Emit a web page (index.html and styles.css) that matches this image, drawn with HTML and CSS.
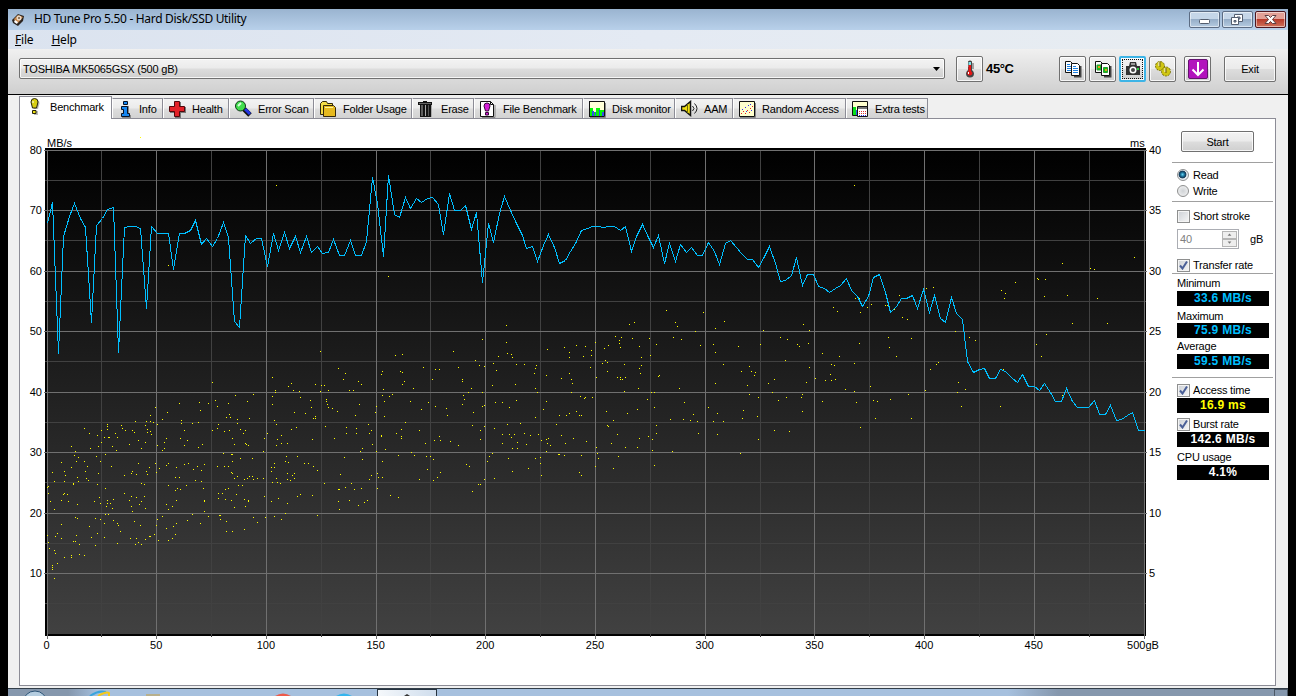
FILE: index.html
```html
<!DOCTYPE html>
<html lang="en">
  <head>
    <meta charset="UTF-8" />
    <meta name="viewport" content="width=device-width, initial-scale=1.0" />
    <title>HD Tune Pro 5.50 - Hard Disk/SSD Utility</title>
    <link rel="stylesheet" href="styles.css">
  </head>
  <body>
    <div class="window">
      <!-- Title bar -->
      <header class="title-bar">
        <svg class="app-icon" width="16" height="16" viewBox="0 0 16 16">
          <path d="M2 8 8 2l6 2-1 5-5 5-5-3z" fill="#2b2521"/>
          <path d="M4 7 8 3l5 2-5 6-3-2z" fill="#c9874a"/>
          <circle cx="9" cy="6" r="2.500" fill="#ead9c6"/>
          <circle cx="9" cy="6" r="1" fill="#75583c"/>
          <path d="m5 8 3 2-1 2-3-2z" fill="#fff"/>
        </svg>
        <span class="title">HD Tune Pro 5.50 - Hard Disk/SSD Utility</span>
        <div class="window-buttons">
          <button class="window-button">
            <svg width="29" height="15" viewBox="0 0 29 15"><rect x="9.500" y="7.500" width="10" height="4" rx="1" fill="#fff" stroke="#535d6e"/></svg>
          </button>
          <button class="window-button">
            <svg width="29" height="15" viewBox="0 0 29 15" fill="#fff" stroke="#535d6e">
              <path d="M11.500 2.500h8v7h-8z"/><path d="M14 5h3v2h-3z" fill="#9db3cc"/>
              <path d="M8.500 5.500h7v7h-7z"/><path d="M11 8.500h2v1.500h-2z" fill="#9db3cc"/>
            </svg>
          </button>
          <button class="window-button close">
            <svg width="29" height="15" viewBox="0 0 29 15"><path d="M9 3.500h3.500l2 2 2-2H20l-3.500 4 3.500 4h-3.500l-2-2-2 2H9l3.500-4z" fill="#fff" stroke="#5c3f42"/></svg>
          </button>
        </div>
      </header>

      <nav class="menu">
        <span><u>F</u>ile</span>
        <span><u>H</u>elp</span>
      </nav>

      <!-- Toolbar -->
      <div class="toolbar">
        <div class="drive-select">
          <span>TOSHIBA MK5065GSX (500 gB)</span>
          <svg width="7" height="4" viewBox="0 0 7 4"><path d="M0 0h7L3.500 4z"/></svg>
        </div>
        <button class="tool-button thermometer">
          <svg width="18" height="20" viewBox="0 0 18 20">
            <path d="M7 2.500Q9 .5 11 2.500V11q2 1.500 2 3.500a4 4 0 0 1-8 0Q5 12.500 7 11z" fill="#444"/>
            <path d="M7.500 3h2.500v5H7.500z" fill="#7fe3ea"/>
            <path d="M7.500 6h2.500v6l1.500 2a2.700 2.700 0 0 1-5.300.500q0-1.500 1.300-2.500z" fill="#e81414"/>
            <path d="M11 5h2M11 7h2M11 9h2" stroke="#555"/>
            <path d="M7.500 13v2" stroke="#fff"/>
          </svg>
        </button>
        <span class="temperature">45°C</span>
        <div class="tool-group">
          <button class="tool-button">
            <svg width="18" height="18" viewBox="0 0 18 18" stroke="#111" fill="#fff">
              <path d="M16.500 6v10.500H10" fill="none" stroke="#444" stroke-width="2"/>
              <path d="M1.500 1.500h5l2 2v9h-7z"/><path d="M7.500 3.500h6l2 2v10h-8z"/>
              <path d="M3 4.500h3M3 6.500h4M3 8.500h4M3 10.500h4M9 6.500h3M9 8.500h5M9 10.500h5M9 12.500h5" stroke="#1e80e0"/>
            </svg>
          </button>
          <button class="tool-button">
            <svg width="18" height="18" viewBox="0 0 18 18" stroke="#111" fill="#fff">
              <path d="M16.500 6v10.500H10" fill="none" stroke="#444" stroke-width="2"/>
              <path d="M1.500 1.500h5l2 2v9h-7z"/><path d="M3 5h4v5H3z" fill="#15c51b" stroke="#2d9b31"/>
              <path d="M7.500 3.500h6l2 2v10h-8z"/><path d="M9.500 7.500h4v5h-4z" fill="#15c51b" stroke="#2d9b31"/>
              <path d="M4 6h2v2H4zM11 9h2v2h-2z" fill="#e6a01a" stroke="none"/>
            </svg>
          </button>
          <button class="tool-button focused">
            <svg width="18" height="18" viewBox="0 0 18 18">
              <path d="M2 6h3l1-4h6l1 4h3v9H2z" fill="#333"/><path d="M7 3h4v2H7z" fill="#999"/>
              <circle cx="9" cy="10" r="3.500" fill="#fff"/><circle cx="9" cy="10" r="2" fill="#484848"/>
              <path d="M13 8h2v2h-2z" fill="#28d13c"/>
            </svg>
          </button>
          <button class="tool-button">
            <svg width="20" height="18" viewBox="0 0 20 18">
              <g fill="#cfc613" stroke="#77700a" stroke-dasharray="2 1">
                <circle cx="7" cy="6" r="4.500"/>
                <circle cx="13" cy="11.500" r="4.500"/>
              </g>
              <path d="M6 2v4M12 8v4" stroke="#fff"/><path d="M7 2v5M13 8v5" stroke="#6c5d12"/>
            </svg>
          </button>
          <button class="tool-button download">
            <svg width="20" height="20" viewBox="0 0 20 20">
              <rect x=".5" y=".5" width="19" height="19" rx="1.500" fill="#b213bd" stroke="#651370"/>
              <path d="M10 3v13M4.500 10.500 10 16l5.500-5.500" fill="none" stroke="#fff" stroke-width="2"/>
            </svg>
          </button>
          <button class="exit-button">Exit</button>
        </div>
      </div>

      <!-- Tabs -->
      <div class="tabs">
        <div class="tab active">
          <svg width="18" height="18" viewBox="0 0 18 18">
            <path d="M10.500 1.500q4 0 4 4L13 11H9L7.500 5.500q0-4 3-4zM9 13h4v4H9z" fill="#777" opacity=".5"/>
            <path d="M9.500.5Q13 .5 13 4l-1.500 6h-4L6 4Q6 .5 9.500.5z" fill="#d8cf12" stroke="#26230b"/>
            <path d="M7.500 12.500H11v3H7.500z" fill="#eee213" stroke="#26230b"/><path d="M8 3v2" stroke="#fff"/>
          </svg>Benchmark
        </div>
        <div class="tab info">
          <svg width="18" height="18" viewBox="0 0 18 18">
            <path d="M5 6h6v9h2v3H4v-3h1z" fill="#888"/>
            <path d="M5.500 1.500h4v3h-4zM3.500 6.500h6v7h2v3h-8v-3h2v-4h-2z" fill="#1687f2" stroke="#061226"/>
          </svg>Info
        </div>
        <div class="tab">
          <svg width="18" height="18" viewBox="0 0 18 18">
            <path d="M6 2h6v5h5v6h-5v5H6v-5H1V7h5z" fill="#777"/>
            <path d="M5.500 1.500h5v5h5v5h-5v5h-5v-5h-5v-5h5z" fill="#e32128" stroke="#53070b"/>
          </svg>Health
        </div>
        <div class="tab">
          <svg width="18" height="18" viewBox="0 0 18 18">
            <path d="m9 9 6 6" stroke="#111" stroke-width="5"/><path d="m10 9 5 5" stroke="#2436e4" stroke-width="3"/>
            <circle cx="5.500" cy="6" r="5" fill="#41de4d" stroke="#12351a"/><path d="m3 6 3-3" stroke="#d5ffd8" stroke-width="2"/>
          </svg>Error Scan
        </div>
        <div class="tab">
          <svg width="18" height="18" viewBox="0 0 18 18" stroke="#33270a">
            <path d="M.5 14.500v-11l2-2h4l1 2h5v11z" fill="#f4dc45"/><path d="M3.500 16.500v-11h10l2 2v9z" fill="#e6b91e"/>
            <path d="M5 7.500h8" stroke="#fff294"/>
          </svg>Folder Usage
        </div>
        <div class="tab">
          <svg width="18" height="18" viewBox="0 0 18 18">
            <path d="M0 2h5V1h4v1h5v3h-1v12H2V5H0z" fill="#141414"/>
            <path d="M4 5v11M7.500 5v11" stroke="#aaa"/><path d="M1 3.500h12" stroke="#666"/><path d="M10.500 5v11" stroke="#555"/><path d="M13.500 5v12" stroke="#aaa"/>
          </svg>Erase
        </div>
        <div class="tab">
          <svg width="18" height="18" viewBox="0 0 18 18">
            <path d="M2 17.500h13V5" fill="none" stroke="#888"/>
            <path d="M.5 1.500h10l3 3v12H.5z" fill="#fff" stroke="#111"/><path d="M10.500 1.500v3h3" fill="none" stroke="#111"/>
            <path d="M7 3q3 0 3 3l-1.500 5h-3L4 6q0-3 3-3z" fill="#d41bd6" stroke="#36073a"/><path d="M5.500 12.500h3V15h-3z" fill="#d41bd6" stroke="#36073a"/>
          </svg>File Benchmark
        </div>
        <div class="tab">
          <svg width="18" height="18" viewBox="0 0 18 18">
            <path d="M1 17.500h15.500V3" fill="none" stroke="#888"/><path d="M-.5 1.500h16v15h-16z" fill="#ffffd8" stroke="#111"/>
            <path d="M.5 1v16" stroke="#111"/><path d="M1 8h3v4h3V8h4v2h4v6H1z" fill="#08f508"/>
            <path d="M3 11h2v5H3zM6 12h1v4H6zM10 10h1v6h-1zM13 12h2v4h-2z" fill="#3154e5"/>
          </svg>Disk monitor
        </div>
        <div class="tab">
          <svg width="18" height="18" viewBox="0 0 18 18">
            <path d="M.5 6.500h3l6-5v14l-6-5h-3z" fill="#f0df12" stroke="#111" stroke-width="1.500"/><path d="M6.500 4v9" stroke="#766c07"/>
            <path d="M11.500 6q3 2.500 0 5M13.500 3.500q5 5 0 10" fill="none" stroke="#222"/>
          </svg>AAM
        </div>
        <div class="tab">
          <svg width="18" height="18" viewBox="0 0 18 18">
            <path d="M1 17.500h15.500V3" fill="none" stroke="#888"/><path d="M.5 1.500h15v15H.5z" fill="#ffffce" stroke="#111"/>
            <path d="M2 13h1v1H2zM4 11h1v1H4zM6 13h1v1H6zM8 10h1v1H8zM10 12h1v1h-1zM11 8h1v1h-1zM13 6h1v1h-1z" fill="#e22"/>
            <path d="M3 9h1v1H3zM6 7h1v1H6zM7 11h1v1H7zM9 5h1v1H9zM11 4h1v1h-1zM12 10h1v1h-1z" fill="#33e"/>
          </svg>Random Access
        </div>
        <div class="tab">
          <svg width="18" height="18" viewBox="0 0 18 18">
            <path d="M.5 1.500h15v14H.5z" fill="#ffffce" stroke="#111"/><path d="M1 7h3v8H1z" fill="#08df18"/><path d="M4 10h2v5H4z" fill="#3154e5"/>
            <path d="M5.500 6.500h10v10h-10z" fill="#fff" stroke="#111"/><path d="M6 8h9" stroke="#777" stroke-width="2"/>
            <path d="M7 11.500h8M7 13.500h8" stroke="#d33" stroke-dasharray="1 1"/><path d="M7 15.500h8" stroke="#33e" stroke-dasharray="1 1"/>
          </svg>Extra tests
        </div>
      </div>

      <!-- Benchmark page -->
      <main class="panel">
        <svg class="chart" id="chart" width="1152" height="530" viewBox="0 0 1152 530">
          <defs>
            <linearGradient id="plot-fill" x1="0" y1="0" x2="0" y2="1">
              <stop offset="0" stop-color="#000"/>
              <stop offset="1" stop-color="#414141"/>
            </linearGradient>
          </defs>
          <rect x="25" y="18" width="1101" height="488"/>
          <rect x="27" y="20" width="1097" height="484" fill="url(#plot-fill)"/>
        </svg>

        <aside class="sidebar">
          <button class="start-button">Start</button>
          <hr class="after-start">
          <label class="option first"><i class="radio checked"></i>Read</label>
          <label class="option"><i class="radio"></i>Write</label>
          <hr class="after-mode">
          <label class="option short-stroke"><i class="check"></i>Short stroke</label>
          <div class="stroke-size">
            <div class="spinner">
              <span>40</span>
              <div class="arrows">
                <svg width="13" height="8" viewBox="0 0 13 8"><path d="M4 5h5L6.500 2z"/></svg>
                <svg width="13" height="8" viewBox="0 0 13 8"><path d="M4 2h5L6.500 5z"/></svg>
              </div>
            </div>
            <span>gB</span>
          </div>
          <label class="option transfer"><i class="check"><svg width="9" height="9" viewBox="0 0 9 9"><path d="M1 4.500 3.500 7.500 8 .5"/></svg></i>Transfer rate</label>
          <hr>
          <div class="caption minimum">Minimum</div>
          <div class="value">33.6 MB/s</div>
          <div class="caption maximum">Maximum</div>
          <div class="value">75.9 MB/s</div>
          <div class="caption">Average</div>
          <div class="value">59.5 MB/s</div>
          <hr class="after-rates">
          <label class="option first"><i class="check"><svg width="9" height="9" viewBox="0 0 9 9"><path d="M1 4.500 3.500 7.500 8 .5"/></svg></i>Access time</label>
          <div class="value access">16.9 ms</div>
          <label class="option burst-option"><i class="check"><svg width="9" height="9" viewBox="0 0 9 9"><path d="M1 4.500 3.500 7.500 8 .5"/></svg></i>Burst rate</label>
          <div class="value plain">142.6 MB/s</div>
          <div class="caption cpu">CPU usage</div>
          <div class="value plain">4.1%</div>
        </aside>
      </main>

      <!-- Taskbar -->
      <footer class="taskbar">
        <svg width="360" height="7" viewBox="0 0 360 7">
          <circle cx="27" cy="14" r="12" fill="#b5cde0" stroke="#2b5275"/>
          <path d="M82 7q8-6 16-4" fill="none" stroke="#3aa5dc" stroke-width="2"/>
          <path d="M90 7q8-5 11-3v3" fill="none" stroke="#f4c81c" stroke-width="2"/>
          <path d="M138 5h14v2h-14z" fill="#b8b08c"/>
          <path d="M267 7q8-5 16 0z" fill="#ed5a4b"/>
          <path d="M328 7q8-5 16 0z" fill="#35b5ee"/>
        </svg>
        <div class="task"><svg width="6" height="2" viewBox="0 0 6 2"><path d="m0 2 3-2 3 2z" fill="#333"/></svg></div>
        <div class="show-desktop"></div>
      </footer>
    </div>
    <script src="chart.js"></script>
  </body>
</html>
```
FILE: styles.css
```css
/* Base styles */
* {
  margin: 0;
  padding: 0;
  box-sizing: border-box;
}

body {
  width: 1296px;
  height: 696px;
  padding: 9px 8px 0;
  background: #000;
  color: #000;
  font-family: "Liberation Sans", Arial, sans-serif;
  font-size: 11px;
  letter-spacing: -0.2px;
  overflow: hidden;
}

button {
  font: inherit;
  letter-spacing: inherit;
}

svg {
  display: block;
  flex: none;
}

.window {
  display: flex;
  flex-direction: column;
  height: 687px;
  background: #f0f0f0;
}

/* Title bar */
.title-bar {
  display: flex;
  align-items: center;
  height: 21px;
  padding: 0 2px;
  background: linear-gradient(#9ab4d0, #b8d0ea);
}

.title {
  margin-left: 8px;
  font-family: "Noto Sans", sans-serif;
  font-size: 12px;
  letter-spacing: -0.32px;
  line-height: 18px;
  padding-bottom: 2px;
}

.window-buttons {
  display: flex;
  gap: 2px;
  margin-left: auto;
}

.window-button {
  width: 31px;
  height: 17px;
  border: 1px solid #5c6c83;
  border-radius: 2px;
  background: linear-gradient(#c5d6e8 45%, #96aec8 50%, #b5cbe1);
  box-shadow: inset 0 0 0 1px rgba(255, 255, 255, 0.5);
}

.window-button.close {
  border-color: #4e1720;
  background: linear-gradient(#e2a096 45%, #b83b2b 50%, #cf725c);
}

/* Menu */
.menu {
  display: flex;
  gap: 18px;
  height: 19px;
  padding: 1px 7px;
  background: linear-gradient(to right, #dbe3ef, #e4eaf3 50%, #e8edf1);
  font-family: "Noto Sans", sans-serif;
  font-size: 12px;
  line-height: 18px;
}

/* Toolbar */
.toolbar {
  display: flex;
  align-items: center;
  height: 46px;
  padding: 0 12px 6px 11px;
  border-bottom: 1px solid #000;
  background: linear-gradient(#f0f0f0, #cfcfcf);
}

.drive-select,
.tool-button,
.exit-button,
.start-button {
  border: 1px solid #707070;
  border-radius: 2px;
  background: linear-gradient(#f3f3f3, #ebebeb 48%, #dddddd 52%, #cfcfcf);
  box-shadow: inset 0 0 0 1px rgba(255, 255, 255, 0.8);
}

.drive-select {
  display: flex;
  align-items: center;
  justify-content: space-between;
  width: 926px;
  height: 21px;
  padding: 0 4px 0 3px;
}

.tool-button {
  display: flex;
  align-items: center;
  justify-content: center;
  width: 27px;
  height: 26px;
}

.thermometer {
  margin-left: 11px;
}

.temperature {
  margin-left: 3px;
  font-size: 13px;
  font-weight: bold;
  letter-spacing: -0.35px;
}

.tool-group {
  display: flex;
  gap: 3px;
  margin-left: auto;
}

.tool-button.focused {
  border: 2px solid #3db4e6;
  outline: 1px dotted #111;
  outline-offset: -4px;
}

.download {
  margin-left: 5px;
}

.exit-button {
  width: 52px;
  height: 26px;
  margin-left: 10px;
}

/* Tabs */
.tabs {
  display: grid;
  grid-template-columns: 93px 51px 66px 85px 98px 62px 109px 92px 58px 113px 82px;
  align-items: end;
  height: 23px;
  padding-left: 11px;
}

.tab {
  display: flex;
  align-items: center;
  gap: 5px;
  height: 20px;
  padding-left: 5px;
  border: 1px solid #8c8c96;
  border-left-color: #fff;
  border-bottom: none;
  background: linear-gradient(#f3f3f3, #ebebeb 48%, #dddddd 52%, #d2d2d2);
  white-space: nowrap;
}

.tab.info {
  gap: 3px;
}

.tab.active {
  z-index: 1;
  height: 23px;
  margin-bottom: -1px;
  padding-bottom: 2px;
  gap: 7px;
  border-left-color: #8c8c96;
  background: #fff;
}

/* Panel */
.panel {
  display: flex;
  width: 1257px;
  height: 568px;
  margin-left: 11px;
  border: 1px solid #8c8c96;
  background: #fff;
}

.chart {
  margin-top: 11px;
}

.chart .lines,
.chart .samples,
.chart .transfer-line {
  shape-rendering: crispEdges;
}

.chart text {
  font-size: 11px;
  letter-spacing: 0;
}

.chart .major {
  fill: #707070;
}

.chart .minor {
  fill: #414141;
}

.transfer-line {
  fill: none;
  stroke: #00bfff;
  stroke-width: 1;
}

.samples {
  fill: #ff0;
}

/* Sidebar */
.sidebar {
  display: flex;
  flex-direction: column;
  width: 101px;
  padding-top: 12px;
}

.sidebar hr {
  flex: none;
  height: 1px;
  border: none;
  background: #a0a0a0;
}

.start-button {
  width: 73px;
  height: 21px;
  margin-left: 9px;
}

hr.after-start {
  margin-top: 10px;
}

hr.after-mode {
  margin-top: 2px;
}

hr.after-rates {
  margin-top: 8px;
}

.option {
  display: flex;
  align-items: center;
  gap: 3px;
  height: 16px;
  padding-left: 5px;
}

.option.first {
  margin-top: 4px;
}

.short-stroke {
  margin-top: 6px;
}

.transfer {
  margin-top: 8px;
}

.burst-option {
  margin-top: 3px;
}

.radio {
  width: 12px;
  height: 12px;
  margin-right: 1px;
  border: 1px solid #8e8f8f;
  border-radius: 50%;
  background: radial-gradient(#d0d3d6, #f6f6f6);
}

.radio.checked {
  background: radial-gradient(circle at 45% 45%, #5fd0f3 0, #146087 30%, #153550 45%, #e5eaf0 55%);
}

.check {
  width: 13px;
  height: 13px;
  padding: 1px;
  border: 1px solid #8e8f8f;
  background: linear-gradient(135deg, #ccd0d5, #f6f6f6);
  box-shadow: inset 0 0 0 1px #f4f4f4;
}

.check path {
  fill: none;
  stroke: #4a5f97;
  stroke-width: 2;
}

.stroke-size {
  display: flex;
  align-items: center;
  gap: 11px;
  height: 20px;
  margin-top: 5px;
  padding-left: 5px;
}

.spinner {
  display: flex;
  align-items: center;
  justify-content: space-between;
  width: 62px;
  height: 20px;
  padding: 1px 1px 1px 2px;
  border: 1px solid #abadb3;
  color: #808080;
}

.arrows {
  display: grid;
}

.arrows svg {
  border: 1px solid #b5b5b5;
  background: #eee;
  fill: #777;
  width: 15px;
  height: 8px;
}

.caption {
  height: 16px;
  padding-left: 5px;
  line-height: 16px;
}

.minimum {
  margin-top: 1px;
}

.maximum {
  height: 15px;
  margin-top: 2px;
}

.cpu {
  margin-top: 2px;
}

.value {
  width: 92px;
  height: 15px;
  margin-left: 5px;
  background: #000;
  color: #00bfff;
  font-size: 12px;
  font-weight: bold;
  letter-spacing: 0.3px;
  line-height: 15px;
  text-align: center;
}

.value.access {
  color: #ff0;
}

.value.plain {
  color: #fff;
}

/* Taskbar */
.taskbar {
  display: flex;
  height: 8px;
  margin-top: 2px;
  border-top: 1px solid #333e49;
  background: linear-gradient(to right, #8597ad 60px, #a6c0de 90px, #a6c0de 1000px, #8597ad 1050px);
}

.task {
  display: flex;
  align-items: flex-end;
  justify-content: center;
  width: 60px;
  margin-left: 9px;
  border: 1px solid #263340;
  border-bottom: none;
  background: linear-gradient(to right, #f5f8fb, #cfdded);
}

.show-desktop {
  width: 14px;
  margin-left: auto;
  border: 1px solid #4c5866;
  border-bottom: none;
}
```
FILE: chart.js
```js
// Transfer rate line, x,y in chart units
const transfer = `
27,93 32,72 38,223 43,106 49,86 54,73 60,88 65,97 71,192 76,95 82,88 87,79 93,77 98,222 104,97
109,96 115,96 120,98 126,178 131,96 137,103 142,103 148,103 153,139 159,103 164,103 170,100
175,90 181,114 186,108 192,116 197,108 203,92 208,107 214,191 219,197 225,105 230,113 236,108
241,108 247,136 253,103 258,120 264,102 269,118 275,106 280,122 286,106 291,122 297,116 302,123
308,122 313,109 319,125 324,125 330,110 335,125 341,125 346,111 352,47 357,73 363,126 368,45
374,84 379,87 385,67 390,78 396,68 401,72 407,68 412,67 418,74 423,104 429,63 434,80 440,80
445,75 451,99 456,82 462,152 468,93 473,112 479,83 484,66 490,80 496,93 502,105 506,118 512,116
517,131 523,115 528,104 534,117 539,133 545,130 550,121 555,113 561,100 567,98 572,96 578,96
583,97 588,96 594,96 600,100 605,96 611,121 616,106 622,94 628,107 633,117 638,105 644,133
649,113 655,131 660,114 666,122 671,117 677,125 682,125 688,112 694,121 699,134 705,113 710,110
716,117 721,123 727,129 732,129 738,137 744,126 749,116 755,133 760,151 765,150 771,145 776,127
782,155 787,144 793,144 798,156 804,158 809,162 815,158 820,155 826,148 831,160 837,166 842,176
848,166 853,147 859,144 865,162 870,182 876,176 881,168 886,168 892,165 897,178 903,159 909,182
914,165 920,188 925,192 931,167 936,183 942,189 947,231 953,242 959,239 964,238 969,248 975,248
980,239 985,241 992,248 997,252 1002,244 1008,256 1014,256 1019,260 1024,253 1030,262 1035,271
1041,271 1046,258 1052,271 1057,277 1068,277 1074,270 1079,284 1085,284 1090,275 1096,290
1101,289 1107,285 1112,282 1118,300 1124,300`;

// Access time samples
const access = `
120,7 256,55 148,135 300,221 318,238 325,243 323,249 252,247
368,146 486,195 462,209 486,212 433,221 375,225 382,224 478,226 487,223 491,224 492,227 455,230
459,235 464,236 473,233 476,240 496,234 504,234 516,235 515,238 514,243 403,237 415,239 419,239
438,237 362,241 361,244 380,241 382,242 412,249 442,249 527,219 544,217 549,222 549,227 556,215
565,216 563,226 571,220 571,225 575,212 584,218 588,215 595,206 601,207 599,210 599,213 600,217
609,194 614,192 612,208 619,216 629,208 621,227 630,225 636,214 646,180 655,192 657,196 653,207
661,209 675,201 683,182 680,215 695,198 693,214 695,222 585,230 587,232 582,233 587,241 570,237
604,234 621,235 619,238 620,243 526,245 549,243 541,248 551,249 576,247 597,247 600,247 600,249
602,249 605,247 639,245 638,246
834,55 704,191 743,200 718,216 740,214 703,234 721,241 729,236 731,241 735,242 734,245 695,253
727,255 729,264 748,253 754,249 752,262 738,267 758,270 688,277 697,283 693,291 703,291 697,304
723,280 722,288 737,286 738,309 754,300 769,301 760,207 767,209 765,230 777,214 779,216 783,194
789,200 788,213 789,237 786,252 782,264 781,267 766,267 782,281 795,248 802,223 805,250 811,234
814,235 810,244 811,250 815,249 819,226 825,259 802,271 834,233 834,261 836,272 839,213 840,182
813,177 817,181 835,168 839,168 847,177 851,174 865,175 867,175 874,179 879,165 882,187 887,189
868,207 869,217 876,226 891,208 850,256 853,270 857,271 870,269 855,288 840,297 888,264 891,288
905,260 910,239 916,234 918,232 906,158 913,157 935,201 949,207 955,210 938,252 937,262 941,276
945,259 980,276 983,239 981,160 985,163 984,168 995,152 1017,148 1018,149 1025,149 1024,166
1042,133 1047,165 1052,193 1070,138 1074,139 1077,168 1087,193 1114,127 1026,204 1016,214
1021,226 1042,265 720,323
192,252 215,265 233,264 268,256 271,253 273,260 279,261 280,267 295,254 301,255 304,255 300,261
308,260 255,260 255,262 252,266 252,274 338,251 341,254 329,260 333,260 363,259 362,265 364,271
369,266 372,264 195,270 197,276 208,273 227,271 159,273 179,272 188,273 180,280 147,282 135,277
130,285 142,289 161,290 161,293 172,293 178,292 209,284 210,287 206,287 217,289 217,293 229,288
290,270 291,277 306,269 306,271 307,274 308,277 312,278 317,281 274,282 285,283 295,286 295,288
293,288 339,274 335,285 356,276 355,282 364,286 254,290 256,294 87,294 87,296 87,299 81,300
64,298 69,303 77,305 84,307 88,307 89,307 95,303 97,307 101,295 102,298 105,300 112,300 114,302
115,291 126,291 130,291 133,292 125,295 127,299 127,302 130,301 131,304 137,294 118,310 125,312
81,312 109,314 78,316 92,316 70,318 121,318 96,320 51,316 55,321 54,325 58,327 56,331 64,331
41,332 51,337 67,336 76,326 80,331 85,324 91,336 65,341 44,341 45,345 32,342 34,351 44,351
57,347 58,351 66,348 68,350 78,343 104,345 112,341 111,343 116,344 118,333 129,337 126,341
127,344 135,333 136,342 139,338 137,315 142,320 144,318 144,312 146,308 146,335 148,333 156,337
155,347 159,347 164,334 168,333 177,336 173,339 181,340 184,334 175,350 181,351 160,308 164,300
164,315 167,310 178,317 182,314 192,300 197,298 198,294 204,301 209,300 220,299 225,300 223,303
212,308 214,314 225,313 226,314 228,315 203,323 211,324 212,324 220,328 232,328 212,331 197,336
204,336 208,336 211,342 212,343 217,346 214,348 224,349 227,348 229,346 232,346 233,349 237,348
243,348 243,321 244,308 247,303 257,309 261,305 261,313 256,315 267,313 271,299 276,297 292,309
305,296 314,308 326,297 326,303 336,298 336,303 348,294 351,300 349,303 361,305 361,306 376,303
365,319 352,314 342,318 340,321 356,321 324,327 342,329 362,331 378,325 266,326 277,326 265,331
268,332 254,333 254,337 251,337 251,341 284,333 288,333 293,336 297,340 267,343 274,343 272,345
274,348 270,350 267,349 256,348 252,352 257,352 260,353 320,344 349,349 351,345 357,343 358,347
362,347 304,353 331,353 318,359 319,359 325,357 334,359 341,358 357,358 370,365 378,367 280,364
277,366 292,365 258,368 251,371 267,373 244,366 318,371 329,370 347,370 344,372 338,375 319,379
297,385 265,383 254,386 261,389 245,387 233,387 237,392 224,399 212,401 206,401 206,391 200,389
199,385 200,385 188,386 180,393 184,381 172,384 167,390 156,393 153,396 155,404 152,408 148,410
146,398 142,386 137,389 136,395 134,404 138,410 129,406 130,406 125,409 121,414 118,412 115,414
116,408 110,408 120,395 114,391 100,401 98,395 97,393 93,390 97,413 84,407 84,393 80,389 75,388
77,403 71,407 75,415 69,396 85,384 88,384 112,381 111,376 109,370 104,363 111,366 116,367
121,371 119,374 125,378 124,366 121,353 124,354 77,354 85,358 79,367 74,371 80,373 87,370
87,373 90,373 93,369 86,376 92,378 57,374 48,371 47,364 44,363 43,364 41,370 34,379 30,371
28,363 27,357 28,356 53,353 53,354 55,387 57,388 41,394 37,403 35,406 41,408 56,405 53,411
55,411 59,414 59,424 64,425 51,425 51,427 44,427 27,405 28,412 29,418 34,420 35,423 37,433
32,435 32,437 32,439 34,448 148,355 166,355 157,358 155,360 160,359 183,358 184,370 184,371
156,370 146,374 152,376 148,379 198,363 202,363 198,368 205,359 208,358 205,369 211,370 216,364
218,355 222,355 224,369 228,370 228,371 214,377 225,376
384,251 382,254 393,258 442,251 451,258 448,262 443,265 444,269 442,274 462,262 462,276 464,275
453,282 426,278 427,285 415,276 408,272 390,271 401,279 385,292 381,299 381,306 381,308 399,300
405,313 414,310 419,306 420,310 430,311 438,315 452,295 460,300 460,309 464,296 474,298 472,255
495,254 515,258 517,262 475,272 482,272 489,277 496,270 515,287 523,279 526,271 552,253 551,262
560,266 564,268 565,267 572,267 556,281 549,283 539,285 546,285 559,285 561,285 536,294 500,293
487,294 482,304 489,304 494,304 491,307 482,313 497,312 492,318 497,318 504,303 510,305 518,304
506,314 521,310 526,309 528,308 527,313 530,315 526,321 541,305 553,308 545,313 566,311 618,258
604,261 586,281 593,290 607,283 617,279 627,269 631,262 634,262 634,277 659,258 664,272 650,289
663,289 670,290 673,284 677,291 678,303 636,295 636,303 632,309 628,306 619,308 597,304 587,295
588,296 591,313 605,317 617,317 576,317 577,323 578,328 575,336 598,326 593,338 632,320 634,335
652,321 391,322 394,325 406,326 410,326 413,329 407,339 399,349 413,350 417,347 420,342 446,334
449,336 464,349 458,354 460,354 452,361 467,331 469,326 472,323 474,348 488,328 492,341 508,338
515,328 520,327 520,333 521,345 538,324 539,324 544,325 561,325 559,342 561,345`;

const chart = document.getElementById("chart");

function add(parent, name, attrs, text) {
  const el = document.createElementNS("http://www.w3.org/2000/svg", name);
  for (const key in attrs) el.setAttribute(key, attrs[key]);
  if (text !== undefined) el.textContent = text;
  parent.appendChild(el);
  return el;
}

// Grid: minor lines first so that the major ones stay on top
const grid = add(chart, "g", { class: "lines" });
for (const kind of ["minor", "major"]) {
  const major = kind === "major";
  for (let i = major ? 0 : 1; i <= 20; i += 2) {
    add(grid, "rect", { class: kind, x: Math.floor(27 + 54.85 * i), y: 20, width: 1, height: major ? 489 : 487 });
  }
  for (let i = major ? 0 : 1; i < 16; i += 2) {
    const x = major ? 24 : 25;
    add(grid, "rect", { class: kind, x: x, y: Math.floor(20 + 30.25 * i), width: major ? 1103 : 1101, height: 1 });
  }
}

// Axis labels
for (let i = 0; i < 8; i++) {
  const y = Math.floor(20 + 60.5 * i) + 4;
  add(chart, "text", { x: 22, y: y, "text-anchor": "end" }, 80 - i * 10);
  add(chart, "text", { x: 1129, y: y }, 40 - i * 5);
}
for (let i = 0; i <= 10; i++) {
  const last = i === 10;
  add(chart, "text", { x: last ? 1123 : 26.5 + 109.7 * i, y: 519, "text-anchor": "middle" }, i * 50 + (last ? "gB" : ""));
}
add(chart, "text", { x: 27, y: 17 }, "MB/s");
add(chart, "text", { x: 1110, y: 17 }, "ms");

const dots = access.trim().split(/\s+/).map(p => "M" + p + "h1v1h-1z").join("");
add(chart, "path", { class: "samples", d: dots });
add(chart, "polyline", { class: "transfer-line", points: transfer.trim(), transform: "translate(.5 .5)" });
```
